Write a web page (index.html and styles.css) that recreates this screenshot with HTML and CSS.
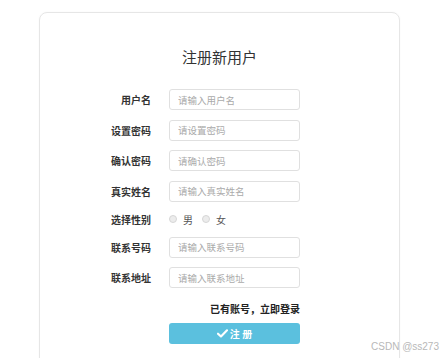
FILE: index.html
```html
<!DOCTYPE html>
<html lang="zh">
<head>
<meta charset="utf-8">
<title>注册新用户</title>
<link rel="stylesheet" href="styles.css">
</head>
<body>
<div class="page">
  <div class="card">
    <h1 class="title">注册新用户</h1>
    <form class="form">
      <div class="row"><label class="label">用户名</label><input class="field" placeholder="请输入用户名"></div>
      <div class="row"><label class="label">设置密码</label><input class="field" type="password" placeholder="请设置密码"></div>
      <div class="row"><label class="label">确认密码</label><input class="field" type="password" placeholder="请确认密码"></div>
      <div class="row"><label class="label">真实姓名</label><input class="field" placeholder="请输入真实姓名"></div>
      <div class="row row-gender"><label class="label">选择性别</label>
        <div class="gender">
          <span class="opt"><input class="radio" type="radio" name="sex"><span>男</span></span>
          <span class="opt"><input class="radio" type="radio" name="sex"><span>女</span></span>
        </div>
      </div>
      <div class="row"><label class="label">联系号码</label><input class="field" placeholder="请输入联系号码"></div>
      <div class="row"><label class="label">联系地址</label><input class="field" placeholder="请输入联系地址"></div>
      <div class="login-line"><a class="login-link">已有账号，立即登录</a></div>
      <div class="btn-line">
        <button class="btn" type="button"><svg class="check" viewBox="0 0 12 10" width="11" height="9"><path d="M1 5.2 L4.3 8.3 L11 1.5" fill="none" stroke="#fff" stroke-width="2.4" stroke-linecap="round" stroke-linejoin="round"/></svg><span>注 册</span></button>
      </div>
    </form>
  </div>
  <div class="watermark">CSDN @ss273</div>
</div>
</body>
</html>
```
FILE: styles.css
```css
html, body {
  margin: 0;
  padding: 0;
  height: 100%;
  overflow: hidden;
  background: #fff;
}
.page {
  position: relative;
  height: 358px;
  padding-top: 12px;
  box-sizing: border-box;
  overflow: hidden;
  font-family: "Noto Sans CJK SC", "Noto Sans", sans-serif;
  color: #333;
}
.card {
  margin-left: 39px;
  width: 361px;
  height: 362px;
  box-sizing: border-box;
  border: 1px solid #e6e6e6;
  border-radius: 8px;
  box-shadow: 0 0 2px rgba(0,0,0,0.04);
  padding-top: 34px;
}
.title {
  margin: 0 0 22px;
  font-size: 15px;
  line-height: 20px;
  font-weight: 400;
  text-align: center;
  color: #333;
}
.form {
  display: flex;
  flex-direction: column;
  gap: 9.5px;
}
.row {
  display: flex;
  align-items: center;
  height: 21px;
}
.row-gender {
  height: 16px;
}
.label {
  width: 111px;
  margin-right: 18px;
  text-align: right;
  font-size: 10px;
  font-weight: 700;
  color: #333;
}
.field {
  width: 131px;
  height: 21px;
  box-sizing: border-box;
  margin: 0;
  border: 1px solid #e0e0e0;
  border-radius: 3px;
  padding: 0 8px;
  font-family: "Noto Sans CJK SC", sans-serif;
  font-size: 9.5px;
  outline: none;
  background: #fff;
}
.field::placeholder {
  color: #aaa;
}
.gender {
  display: flex;
  align-items: center;
  gap: 9px;
  font-size: 10px;
  color: #555;
}
.opt {
  display: flex;
  align-items: center;
  gap: 6px;
}
.radio {
  appearance: none;
  -webkit-appearance: none;
  width: 8px;
  height: 8px;
  margin: 0;
  border: 1px solid #d6d6d6;
  border-radius: 50%;
  background: #ececec;
  box-sizing: border-box;
}
.login-line {
  display: flex;
  justify-content: flex-end;
  width: 260px;
  margin-top: 4px;
  height: 14px;
  align-items: center;
}
.login-link {
  font-size: 10px;
  font-weight: 700;
  color: #222;
}
.btn-line {
  padding-left: 129px;
  margin-top: -2.5px;
}
.btn {
  width: 131px;
  height: 21px;
  border: none;
  border-radius: 3px;
  background: #5bc0de;
  color: #fff;
  font-family: "Noto Sans CJK SC", sans-serif;
  font-size: 10px;
  font-weight: 700;
  display: flex;
  align-items: center;
  justify-content: center;
  gap: 2px;
  padding: 0;
}
.check {
  display: block;
}
.watermark {
  position: absolute;
  right: 4px;
  bottom: 6px;
  font-family: "Liberation Sans", sans-serif;
  font-size: 10px;
  color: #b8b8b8;
}
```
